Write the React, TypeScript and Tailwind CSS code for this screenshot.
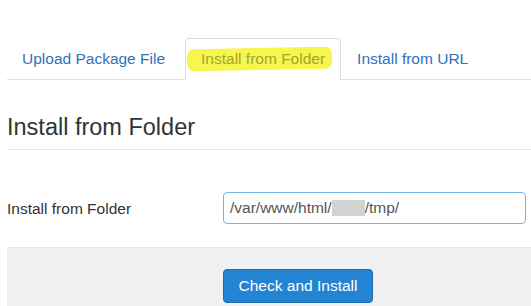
export default function App() {
  return (
    <div className="min-h-screen bg-white pl-[7px] pt-[38px] font-['Liberation_Sans',Arial,sans-serif] text-[15.5px] text-[#333]">
      <ul className="flex h-[42px] border-b border-[#ddd]">
        <li className="flex h-[41px] items-center px-[15px] text-[#2f72b8]">Upload Package File</li>
        <li className="relative ml-[5px] -mb-px flex h-[42px] items-center rounded-t-[4px] border border-b-0 border-[#ddd] bg-white px-[15px] text-[#a3a336]">
          <span className="absolute left-[1px] top-[9px] h-[22px] w-[145px] -rotate-[1deg] rounded-[7px] bg-[#f6f64c]" />
          <span className="relative pb-[1px]">Install from Folder</span>
        </li>
        <li className="ml-[1px] flex h-[41px] items-center px-[15px] text-[#2f72b8]">Install from URL</li>
      </ul>

      <h2 className="mt-[34px] border-b border-[#e5e5e5] pb-[9px] text-[23.5px] leading-[26px] font-normal text-[#333]">
        Install from Folder
      </h2>

      <div className="mt-[42px] flex items-center">
        <label className="w-[216px] pt-[2px] text-[#333]">Install from Folder</label>
        <div className="flex h-[32px] w-[303px] items-center rounded-[4px] border border-[#74b5e8] px-[6px] text-[#555]">
          <span>/var/www/html/</span>
          <span className="h-[16px] w-[33px] bg-[#d2d2d2]" />
          <span>/tmp/</span>
        </div>
      </div>

      <div className="mt-[23px] border-t border-[#e5e5e5] bg-[#f0f0f0] pl-[216px] pt-[21px] pb-[20px]">
        <button
          type="button"
          className="h-[34px] w-[150px] rounded-[4px] border border-[#1b6db0] bg-[#2384d3] text-white"
        >
          Check and Install
        </button>
      </div>
    </div>
  );
}
